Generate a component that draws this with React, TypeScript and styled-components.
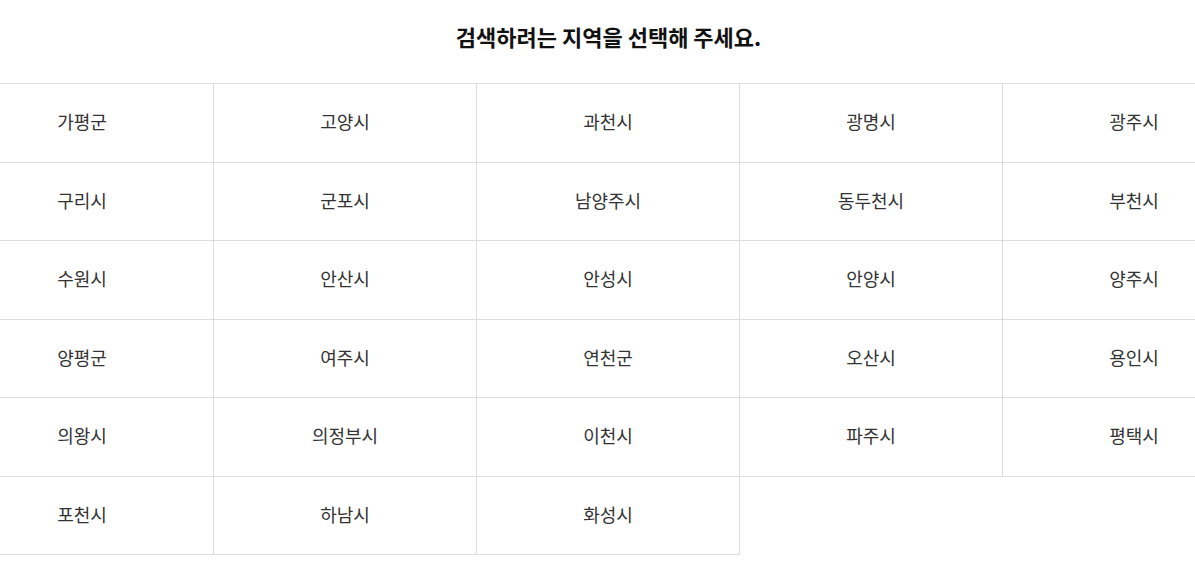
import React from "react";
import styled, { createGlobalStyle } from "styled-components";

const GlobalStyle = createGlobalStyle`
  html, body {
    margin: 0;
    padding: 0;
    background: #fff;
    overflow: hidden;
  }
  body {
    font-family: "Noto Sans CJK KR", "Noto Sans", sans-serif;
  }
`;

const Page = styled.div`
  width: 1315px;
  margin-left: -49px;
`;

const Title = styled.h2`
  margin: 0;
  height: 83px;
  box-sizing: border-box;
  padding-top: 20px;
  text-align: center;
  font-size: 22px;
  line-height: 32px;
  font-weight: 700;
  color: #111;
`;

const Grid = styled.ul`
  list-style: none;
  margin: 0;
  padding: 0;
  display: grid;
  grid-template-columns: repeat(5, 263px);
  border-top: 1px solid #dcdcdc;
`;

const Cell = styled.li`
  box-sizing: border-box;
  height: 78.5px;
  padding-bottom: 3px;
  display: flex;
  align-items: center;
  justify-content: center;
  border-bottom: 1px solid #dcdcdc;
  border-right: 1px solid #dcdcdc;
  font-size: 18px;
  color: #333;
  cursor: pointer;
`;

const regions = [
  "가평군", "고양시", "과천시", "광명시", "광주시",
  "구리시", "군포시", "남양주시", "동두천시", "부천시",
  "수원시", "안산시", "안성시", "안양시", "양주시",
  "양평군", "여주시", "연천군", "오산시", "용인시",
  "의왕시", "의정부시", "이천시", "파주시", "평택시",
  "포천시", "하남시", "화성시",
];

export default function App() {
  return (
    <>
      <GlobalStyle />
      <Page>
        <Title>검색하려는 지역을 선택해 주세요.</Title>
        <Grid>
          {regions.map((r) => (
            <Cell key={r}>{r}</Cell>
          ))}
        </Grid>
      </Page>
    </>
  );
}
